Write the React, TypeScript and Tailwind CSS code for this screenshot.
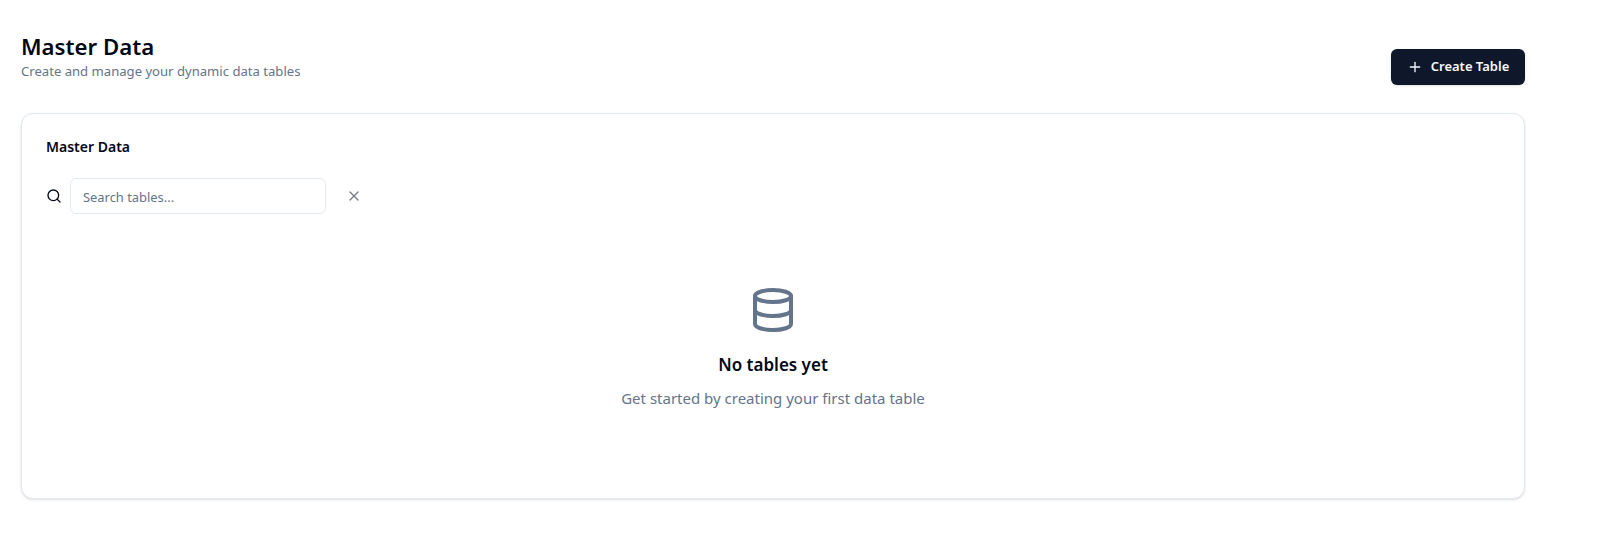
import { Plus, Search, X, Database } from "lucide-react";

export default function App() {
  return (
    <div className="min-h-[551px] bg-white font-['Noto_Sans',sans-serif] text-[#020817]">
      <div className="w-[1525px] pl-[21px] pt-[32px]">
        <div className="flex items-end justify-between">
          <div>
            <h1 className="text-[22.2px] font-semibold leading-[30px]">Master Data</h1>
            <p className="text-[13.1px] leading-[18px] text-[#64748b]">Create and manage your dynamic data tables</p>
          </div>
          <button className="mb-[-5px] flex h-9 w-[134px] items-center justify-center gap-2 rounded-md bg-[#0f172a] text-[13px] font-semibold text-[#f8fafc] shadow-sm">
            <Plus className="h-4 w-4" />
            Create Table
          </button>
        </div>
        <div className="mt-[33px] h-[386px] rounded-xl border border-[#e2e8f0] bg-white shadow-sm">
          <div className="px-6 pt-[23px]">
            <h3 className="text-[14px] font-semibold leading-[20px]">Master Data</h3>
            <div className="mt-[21px] flex items-center gap-2">
              <Search className="h-4 w-4" />
              <input
                readOnly
                placeholder="Search tables..."
                className="h-9 w-64 rounded-md border border-[#e2e8f0] bg-white px-3 pt-[1px] text-[12.9px] outline-none placeholder:text-[#64748b]"
              />
              <div className="ml-[12px] flex h-4 w-4 items-center justify-center text-[#7b7f87]">
                <X className="h-4 w-4" />
              </div>
            </div>
          </div>
          <div className="mt-[72px] flex flex-col items-center">
            <Database className="h-12 w-12 text-[#64748b]" />
            <h3 className="mt-[19px] text-[17px] font-semibold leading-6">No tables yet</h3>
            <p className="mt-[9px] text-[15px] leading-6 text-[#64748b]">Get started by creating your first data table</p>
          </div>
        </div>
      </div>
    </div>
  );
}
